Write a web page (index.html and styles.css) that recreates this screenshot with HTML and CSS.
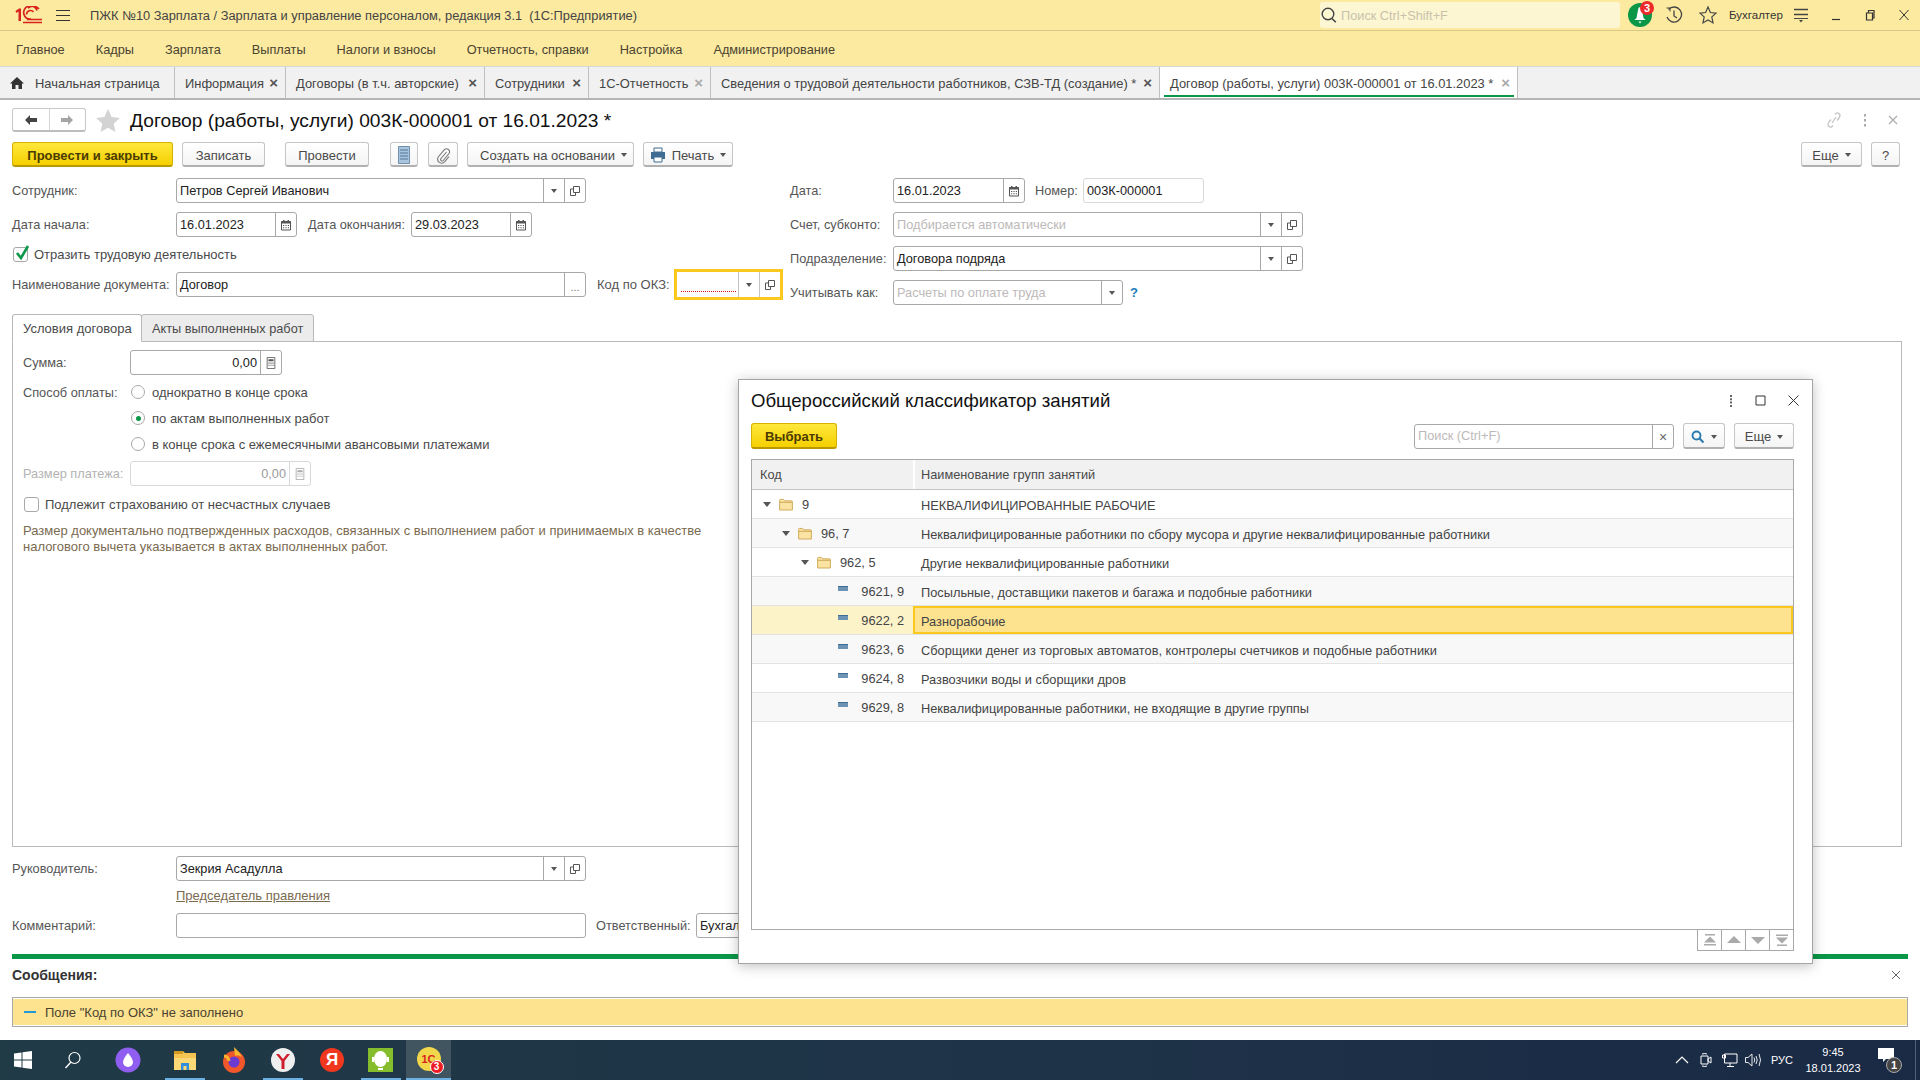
FILE: index.html
```html
<!DOCTYPE html>
<html lang="ru">
<head>
<meta charset="UTF-8" />
<title>Договор (работы, услуги) 003К-000001</title>
<link rel="stylesheet" href="styles.css">
</head>
<body>

<svg class="defs" width="0" height="0">
  <symbol id="copy" viewBox="0 0 12 12"><path d="M4.5 1.5h6v6h-6zM4.5 4h-3v6.5h5V7.5" fill="none" stroke="#555" stroke-width="1"/></symbol>
  <symbol id="cal" viewBox="0 0 12 12"><path d="M1.5 2.5h9v8.500h-9z" fill="#fff" stroke="#555"/><path d="M1.500 2h9v2.500h-9zM3 1h1.500v2H3zM7.500 1H9v2H7.500z" fill="#555"/><path d="M3 6h1.200v1H3zM5.400 6h1.200v1H5.400zM7.800 6H9v1H7.800zM3 8.300h1.200v1H3zM5.400 8.300h1.200v1H5.400zM7.800 8.300H9v1H7.800z" fill="#555"/></symbol>
  <symbol id="calc" viewBox="0 0 12 14"><path d="M1.500 .5h9v13h-9z" fill="#fff" stroke="currentColor"/><path d="M3 2.500h6v2.500H3zM3 6.500h1.300v1.300H3zM5.350 6.500h1.300v1.300h-1.300zM7.700 6.500H9v1.300H7.700zM3 9h1.300v1.300H3zM5.350 9h1.300v1.300h-1.300zM7.700 9H9v1.300H7.700z" fill="currentColor"/></symbol>
  <symbol id="folder" viewBox="0 0 16 14"><path d="M.7 13.300V2.200q0-1 1-1h3.500l1.500 1.600h7.600q1 0 1 1v9.500z" fill="#fbe3a3" stroke="#c9a24d"/><path d="M1 4.500h14" stroke="#c9a24d"/></symbol>
</svg>

<div class="app">

  <header class="titlebar">
    <svg class="logo" width="30" height="18" viewBox="0 0 30 18">
      <path d="M2.500 5 6 2.500h2V15H5.500V5.500L3.300 7z" fill="#d8231f"/>
      <path d="M24 4.500A6 6 0 0 0 11 8.500 6 6 0 0 0 18 13M26 3A8 8 0 0 0 15 2M13.500 8.500a4 4 0 0 1 7-2.600" fill="none" stroke="#d8231f" stroke-width="1.700"/>
      <path d="M14 12.800h15v1.500H14zM10 15.800h19v1.500H10z" fill="#d8231f"/>
    </svg>
    <span class="burger"></span>
    <span class="app-name">ПЖК №10 Зарплата / Зарплата и управление персоналом, редакция 3.1&nbsp; (1С:Предприятие)</span>
    <div class="global-search">
      <svg width="18" height="18" viewBox="0 0 18 18"><circle cx="8" cy="8" r="5.800" fill="none" stroke="#444" stroke-width="1.400"/><path d="m12 12.500 3.800 3.800" stroke="#444" stroke-width="1.600"/></svg>
      <span>Поиск Ctrl+Shift+F</span>
    </div>
    <div class="bell">
      <svg width="26" height="26" viewBox="0 0 26 26"><circle cx="12" cy="14" r="12" fill="#0a9748"/><path d="M12 6q1.500 0 2 3l1.500 8 2 2h-11l2-2 1.500-8q.5-3 2-3zM10.500 20.500h3l-1.500 2z" fill="#fff"/></svg>
      <b class="bell-count">3</b>
    </div>
    <svg class="tb-ico tb-hist" width="20" height="20" viewBox="0 0 20 20"><path d="M4.500 4.500A7.500 7.500 0 1 1 3 12" fill="none" stroke="#444" stroke-width="1.300"/><path d="m2.500 3 3.500 0 0 3.500" fill="none" stroke="#444"/><path d="M10 5.500V11l3 2" fill="none" stroke="#444" stroke-width="1.300"/></svg>
    <svg class="tb-ico tb-star" width="20" height="20" viewBox="0 0 20 20"><path d="m10 2 2.400 5.500 5.600.6-4.200 3.800 1.200 6L10 14.900 5 17.900l1.200-6L2 8.100l5.600-.6z" fill="none" stroke="#444" stroke-width="1.200"/></svg>
    <span class="user-name">Бухгалтер</span>
    <svg class="tb-ico tb-lines" width="16" height="16" viewBox="0 0 16 16"><path d="M1 2.500h14M1 7.500h14" stroke="#444" stroke-width="1.300"/><path d="M1 11.500h14" stroke="#444" stroke-width="1"/><path d="m6 13 2 2.500 2-2.500z" fill="#444"/></svg>
    <div class="win-btns">
      <svg width="12" height="12" viewBox="0 0 12 12"><path d="M2 10.500h8" stroke="#333" stroke-width="1.200"/></svg>
      <svg width="12" height="12" viewBox="0 0 12 12"><path d="M2.500 4h6v7h-6zM4.500 4V1.500h5.500V9H8.500" fill="none" stroke="#333" stroke-width="1.200"/></svg>
      <svg width="12" height="12" viewBox="0 0 12 12"><path d="m1.500 1 9 10M10.500 1l-9 10" stroke="#333" stroke-width="1"/></svg>
    </div>
  </header>

  <nav class="menu">
    <a class="menu-a">Главное</a>
    <a class="menu-a">Кадры</a>
    <a class="menu-a">Зарплата</a>
    <a class="menu-a">Выплаты</a>
    <a class="menu-a">Налоги и взносы</a>
    <a class="menu-a">Отчетность, справки</a>
    <a class="menu-a">Настройка</a>
    <a class="menu-a">Администрирование</a>
  </nav>

  <div class="tabs">
    <div class="tab t-home">
      <svg width="14" height="14" viewBox="0 0 14 14"><path d="M7 1 0 7.500h2V13h3.500V9h3v4H12V7.500h2z" fill="#333"/></svg>
      <span>Начальная страница</span>
    </div>
    <div class="tab t-info"><span>Информация</span><i class="x">×</i></div>
    <div class="tab t-dog"><span>Договоры (в т.ч. авторские)</span><i class="x">×</i></div>
    <div class="tab t-emp"><span>Сотрудники</span><i class="x">×</i></div>
    <div class="tab t-otch"><span>1С-Отчетность</span><i class="x light">×</i></div>
    <div class="tab t-sved"><span>Сведения о трудовой деятельности работников, СЗВ-ТД (создание) *</span><i class="x">×</i></div>
    <div class="tab t-cur"><span>Договор (работы, услуги) 003К-000001 от 16.01.2023 *</span><i class="x light">×</i></div>
  </div>

  <main class="doc">
    <div class="doc-head">
      <div class="nav-arrows">
        <span class="nav-btn">
          <svg width="14" height="12" viewBox="0 0 14 12"><path d="M6 1 1 6l5 5V8h7V4H6z" fill="#444"/></svg>
        </span>
        <span class="nav-btn">
          <svg width="14" height="12" viewBox="0 0 14 12"><path d="m8 1 5 5-5 5V8H1V4h7z" fill="#a5a5a5"/></svg>
        </span>
      </div>
      <svg class="fav" width="26" height="25" viewBox="0 0 26 25"><path d="m13 1 3.600 8 8.400.9-6.300 5.700 1.800 8.400L13 19.700 5.500 24l1.800-8.400L1 9.900 9.400 9z" fill="#d3d3d3"/></svg>
      <h1 class="doc-title">Договор (работы, услуги) 003К-000001 от 16.01.2023 *</h1>
      <div class="head-tools">
        <svg width="16" height="18" viewBox="0 0 16 18"><path d="M9 3.500q2-2.500 4-1t0 4.500l-2 2.500M7 14.500q-2 2.500-4 1T3 11l2-2.500M6 12l4-6" fill="none" stroke="#c4c4c4" stroke-width="1.300"/></svg>
        <svg width="4" height="14" viewBox="0 0 4 14"><path d="M1 1h2v2.500H1zM1 6h2v2.500H1zM1 11h2v2.500H1z" fill="#aaa"/></svg>
        <svg width="10" height="10" viewBox="0 0 10 10"><path d="m1 1 8 8M9 1 1 9" stroke="#aaa" stroke-width="1.100"/></svg>
      </div>
    </div>

    <div class="cmd">
      <button class="btn primary b-post">Провести и закрыть</button>
      <button class="btn b-save">Записать</button>
      <button class="btn b-do">Провести</button>
      <button class="btn b-ic1">
        <svg width="12" height="18" viewBox="0 0 12 18"><path d="M.5.500h11v17H.5z" fill="#a9c4dd" stroke="#6f8fac"/><path d="M2 4h8M2 7h8M2 10h8M2 13h8" stroke="#4f7598"/></svg>
      </button>
      <button class="btn b-ic2">
        <svg width="15" height="17" viewBox="0 0 15 17"><path d="M10.500 5 5 11.500a1.500 1.500 0 0 0 2.300 2L13 6.500a3 3 0 0 0-4.600-3.800L2.600 9.500a4 4 0 0 0 6 5.300L13 9.500" fill="none" stroke="#777" stroke-width="1.100"/></svg>
      </button>
      <button class="btn b-base">Создать на основании<i class="caret"></i></button>
      <button class="btn b-print">
        <svg width="16" height="16" viewBox="0 0 16 16"><path d="M4 1h8v4H4z" fill="#fff" stroke="#3f6c92"/><path d="M1 5h14v7h-3v-2H4v2H1z" fill="#3f6c92"/><path d="M4 10h8v5H4z" fill="#fff" stroke="#3f6c92"/></svg>
        Печать<i class="caret"></i>
      </button>
      <div class="cmd-right">
        <button class="btn b-more">Еще<i class="caret"></i></button>
        <button class="btn b-help">?</button>
      </div>
    </div>

    <div class="cols">
      <div class="col-left">
        <div class="row">
          <label class="lbl l164">Сотрудник:</label>
          <div class="fld w410"><span class="val">Петров Сергей Иванович</span><span class="sb"><i class="caret"></i></span><span class="sb"><svg class="ico"><use href="#copy"/></svg></span></div>
        </div>
        <div class="row">
          <label class="lbl l164">Дата начала:</label>
          <div class="fld w121"><span class="val">16.01.2023</span><span class="sb"><svg class="ico"><use href="#cal"/></svg></span></div>
          <label class="lbl end-lbl">Дата окончания:</label>
          <div class="fld w121"><span class="val">29.03.2023</span><span class="sb"><svg class="ico"><use href="#cal"/></svg></span></div>
        </div>
        <div class="check-row">
          <span class="chk">
            <svg width="16" height="17" viewBox="0 0 16 17"><path d="m3 8 4 5 7-12" fill="none" stroke="#0a9748" stroke-width="2.600"/></svg>
          </span>
          <span class="chk-text">Отразить трудовую деятельность</span>
        </div>
        <div class="row">
          <label class="lbl l164">Наименование документа:</label>
          <div class="fld w410"><span class="val">Договор</span><span class="sb dots">...</span></div>
          <label class="lbl okz-lbl">Код по ОКЗ:</label>
          <div class="fld okz"><span class="val"><i class="need"></i></span><span class="sb"><i class="caret"></i></span><span class="sb"><svg class="ico"><use href="#copy"/></svg></span></div>
        </div>
      </div>

      <div class="col-right">
        <div class="row">
          <label class="lbl l103">Дата:</label>
          <div class="fld w132"><span class="val">16.01.2023</span><span class="sb"><svg class="ico"><use href="#cal"/></svg></span></div>
          <label class="lbl num-lbl">Номер:</label>
          <div class="fld w121 readonly"><span class="val">003К-000001</span></div>
        </div>
        <div class="row">
          <label class="lbl l103">Счет, субконто:</label>
          <div class="fld w410"><span class="val hint">Подбирается автоматически</span><span class="sb"><i class="caret"></i></span><span class="sb"><svg class="ico"><use href="#copy"/></svg></span></div>
        </div>
        <div class="row">
          <label class="lbl l103">Подразделение:</label>
          <div class="fld w410"><span class="val">Договора подряда</span><span class="sb"><i class="caret"></i></span><span class="sb"><svg class="ico"><use href="#copy"/></svg></span></div>
        </div>
        <div class="row">
          <label class="lbl l103">Учитывать как:</label>
          <div class="fld w230"><span class="val hint">Расчеты по оплате труда</span><span class="sb"><i class="caret"></i></span></div>
          <span class="q">?</span>
        </div>
      </div>
    </div>

    <div class="page-tabs">
      <div class="ptab on">Условия договора</div>
      <div class="ptab">Акты выполненных работ</div>
    </div>
    <section class="panel">
      <div class="row">
        <label class="lbl l107">Сумма:</label>
        <div class="fld w152"><span class="val right">0,00</span><span class="sb calc"><svg class="ico"><use href="#calc"/></svg></span></div>
      </div>
      <div class="radio-row first"><label class="lbl l107">Способ оплаты:</label><i class="radio"></i><span>однократно в конце срока</span></div>
      <div class="radio-row"><span class="l107"></span><i class="radio on"></i><span>по актам выполненных работ</span></div>
      <div class="radio-row"><span class="l107"></span><i class="radio"></i><span>в конце срока с ежемесячными авансовыми платежами</span></div>
      <div class="row pay-row">
        <label class="lbl l107 off">Размер платежа:</label>
        <div class="fld w181 disabled"><span class="val right">0,00</span><span class="sb calc"><svg class="ico"><use href="#calc"/></svg></span></div>
      </div>
      <div class="check-row ins"><span class="chk"></span><span class="chk-text">Подлежит страхованию от несчастных случаев</span></div>
      <p class="note">Размер документально подтвержденных расходов, связанных с выполнением работ и принимаемых в качестве<br>налогового вычета указывается в актах выполненных работ.</p>
    </section>

    <div class="row boss">
      <label class="lbl l164">Руководитель:</label>
      <div class="fld w410"><span class="val">Зекрия Асадулла</span><span class="sb"><i class="caret"></i></span><span class="sb"><svg class="ico"><use href="#copy"/></svg></span></div>
    </div>
    <a class="boss-link">Председатель правления</a>
    <div class="row comment">
      <label class="lbl l164">Комментарий:</label>
      <div class="fld w410"></div>
      <label class="lbl resp-lbl">Ответственный:</label>
      <div class="fld w121"><span class="val">Бухгалтер</span></div>
    </div>
    <div class="green-bar"></div>

    <div class="msg-head">
      <b>Сообщения:</b>
      <svg width="10" height="10" viewBox="0 0 10 10"><path d="m1 1 8 8M9 1 1 9" stroke="#666" stroke-width="1"/></svg>
    </div>
    <div class="msg-box"><div class="msg-fill"><i class="dash"></i>Поле "Код по ОКЗ" не заполнено</div></div>
  </main>

  <footer class="taskbar">
    <svg class="task-ico win" width="18" height="18" viewBox="0 0 18 18"><path d="m0 2.500 7.500-1V8.500H0zM8.500 1.300 18 0v8.500H8.500zM0 9.500h7.500v7l-7.500-1zM8.500 9.500H18V18l-9.500-1.300z" fill="#fff"/></svg>
    <svg class="task-ico s" width="18" height="18" viewBox="0 0 18 18"><circle cx="10.500" cy="7" r="5.500" fill="none" stroke="#fff" stroke-width="1.200"/><path d="M7 11 1.500 17" stroke="#fff" stroke-width="1.400"/></svg>
    <svg class="task-ico alice" width="26" height="26" viewBox="0 0 26 26"><circle cx="13" cy="13" r="12.500" fill="#8f5df0"/><path d="M13 6q5 6 5 9a5 5 0 0 1-10 0q0-3 5-9z" fill="#fff"/></svg>
    <svg class="task-ico expl" width="24" height="24" viewBox="0 0 24 24"><path d="M1 3h9l2 2h11v17H1z" fill="#f5c451"/><path d="M1 3h9v3H1z" fill="#d39a22"/><path d="M1 10h22v12H1z" fill="#fbd977"/><path d="M8 15h8v7h-2.500v-4h-3v4H8z" fill="#2f8fdc"/></svg>
    <svg class="task-ico fox" width="24" height="26" viewBox="0 0 24 26"><circle cx="12" cy="15" r="11" fill="#f0572a"/><path d="M12 0q5 4 8 10-5-3-7-1z" fill="#fcb52d"/><circle cx="12" cy="15" r="5.500" fill="#6b3ad1"/><path d="M2 9q4 0 5 5" fill="none" stroke="#fbb52f" stroke-width="3"/></svg>
    <svg class="task-ico yb" width="24" height="24" viewBox="0 0 24 24"><circle cx="12" cy="12" r="12" fill="#efefef"/><path d="m5 6 5.500 7v8h3v-8L19 6h-3l-4 5-4-5z" fill="#cf1d2c"/></svg>
    <div class="task-ico ya">Я</div>
    <svg class="task-ico gr" width="25" height="24" viewBox="0 0 25 24"><path d="M0 0h25v24H0z" fill="#85bd2c"/><ellipse cx="12.500" cy="11" rx="6.500" ry="8" fill="#fff"/><path d="M5 9v5M20 9v5M10 21h5" stroke="#fff" stroke-width="2"/></svg>
    <div class="task-active">
      <div class="c1-ico">1С<b class="c1-badge">3</b></div>
    </div>
    <i class="run r1"></i>
    <i class="run r2"></i>
    <i class="run r3"></i>
    <div class="tray">
      <svg class="tr-cam" width="14" height="8" viewBox="0 0 14 8"><path d="m1 7 6-6 6 6" fill="none" stroke="#fff" stroke-width="1.200"/></svg>
      <svg class="tr-rec" width="12" height="16" viewBox="0 0 12 16"><path d="M1 4h7v8H1zM8 7l3-2v6L8 9zM2 2q3-1 5 0M2 14q3 1 5 0" fill="none" stroke="#fff"/></svg>
      <svg class="tr-net" width="16" height="14" viewBox="0 0 16 14"><path d="M2.500 1H15v9H2.500zM8 10v3M5 13.500h7M.5 2h3v3h-3z" fill="#1b2a45" stroke="#fff"/></svg>
      <svg class="tr-vol" width="16" height="14" viewBox="0 0 16 14"><path d="M.5 4.500H3L7 1v12L3 9.500H.5zM9 4.500q1.500 2.500 0 5M11 3q2.500 4 0 8M14 1q3 6 0 12" fill="none" stroke="#fff" stroke-width=".9"/></svg>
      <span class="lang">РУС</span>
      <div class="clock"><span>9:45</span><span>18.01.2023</span></div>
      <div class="notif">
        <svg width="16" height="15" viewBox="0 0 16 15"><path d="M0 0h16v11H8l-3 3v-3H0z" fill="#fff"/></svg>
        <b>1</b>
      </div>
    </div>
  </footer>

  <div class="dialog">
    <div class="dlg-title">
      <h2>Общероссийский классификатор занятий</h2>
      <svg width="4" height="12" viewBox="0 0 4 12"><path d="M1 0h2v2H1zM1 3.300h2v2H1zM1 6.600h2v2H1zM1 10h2v2H1z" fill="#666"/></svg>
      <svg width="11" height="11" viewBox="0 0 11 11"><path d="M1 1h9v9H1z" fill="none" stroke="#333" stroke-width="1"/></svg>
      <svg width="11" height="11" viewBox="0 0 11 11"><path d="m.5.500 10 10M10.500.500l-10 10" stroke="#333" stroke-width="1"/></svg>
    </div>
    <div class="dlg-tools">
      <button class="btn primary b-pick">Выбрать</button>
      <div class="dlg-right">
        <div class="fld search"><span class="val hint">Поиск (Ctrl+F)</span><span class="sb clr">×</span></div>
        <button class="btn b-find">
          <svg width="14" height="14" viewBox="0 0 14 14"><circle cx="5.500" cy="5.500" r="4" fill="none" stroke="#2c7bb0" stroke-width="1.900"/><path d="m8.500 8.500 4 4" stroke="#2c7bb0" stroke-width="2.200"/></svg>
          <i class="caret"></i>
        </button>
        <button class="btn b-dmore">Еще<i class="caret"></i></button>
      </div>
    </div>
    <div class="grid">
      <div class="g-head"><div class="g-code">Код</div><div class="g-name">Наименование групп занятий</div></div>
      <div class="g-row">
        <div class="g-code tree lv0"><i class="caret open"></i><svg class="folder"><use href="#folder"/></svg><span>9</span></div>
        <div class="g-name">НЕКВАЛИФИЦИРОВАННЫЕ РАБОЧИЕ</div>
      </div>
      <div class="g-row alt">
        <div class="g-code tree lv1"><i class="caret open"></i><svg class="folder"><use href="#folder"/></svg><span>96, 7</span></div>
        <div class="g-name">Неквалифицированные работники по сбору мусора и другие неквалифицированные работники</div>
      </div>
      <div class="g-row">
        <div class="g-code tree lv2"><i class="caret open"></i><svg class="folder"><use href="#folder"/></svg><span>962, 5</span></div>
        <div class="g-name">Другие неквалифицированные работники</div>
      </div>
      <div class="g-row alt">
        <div class="g-code leaf"><i class="item"></i><span>9621, 9</span></div>
        <div class="g-name">Посыльные, доставщики пакетов и багажа и подобные работники</div>
      </div>
      <div class="g-row sel">
        <div class="g-code leaf"><i class="item"></i><span>9622, 2</span></div>
        <div class="g-name">Разнорабочие</div>
      </div>
      <div class="g-row alt">
        <div class="g-code leaf"><i class="item"></i><span>9623, 6</span></div>
        <div class="g-name">Сборщики денег из торговых автоматов, контролеры счетчиков и подобные работники</div>
      </div>
      <div class="g-row">
        <div class="g-code leaf"><i class="item"></i><span>9624, 8</span></div>
        <div class="g-name">Развозчики воды и сборщики дров</div>
      </div>
      <div class="g-row alt">
        <div class="g-code leaf"><i class="item"></i><span>9629, 8</span></div>
        <div class="g-name">Неквалифицированные работники, не входящие в другие группы</div>
      </div>
    </div>
    <div class="pager">
      <span><svg width="14" height="12" viewBox="0 0 14 12"><path d="M2 0h10v1.500H2zM7 2.500l6 6H1zM1 10h12v1.500H1z" fill="#aaa"/></svg></span>
      <span><svg width="14" height="8" viewBox="0 0 14 8"><path d="m7 0 7 7H0z" fill="#aaa"/></svg></span>
      <span><svg width="14" height="8" viewBox="0 0 14 8"><path d="M7 8 14 1H0z" fill="#aaa"/></svg></span>
      <span><svg width="14" height="12" viewBox="0 0 14 12"><path d="M1 .500h12V2H1zM7 9.500l6-6H1zM2 10.500h10V12H2z" fill="#aaa"/></svg></span>
    </div>
  </div>

</div>

</body>
</html>
```

FILE: styles.css
```css
* {
  box-sizing: border-box;
}
html, body {
  margin: 0;
  padding: 0;
}
body {
  font-family: "Liberation Sans", Arial, sans-serif;
  font-size: 12.75px;
  color: #4a4a4a;
  background: #fff;
}
.defs {
  position: absolute;
}
button {
  font-family: inherit;
  font-size: 13px;
}
i {
  font-style: normal;
}
.app {
  position: relative;
  width: 1920px;
  height: 1080px;
  overflow: hidden;
  display: flex;
  flex-direction: column;
}

/* title bar */
.titlebar {
  height: 31px;
  background: #fbeaa0;
  border-bottom: 1px solid #d9c987;
  display: flex;
  align-items: center;
  padding: 0 10px 0 13px;
  flex: none;
}
.logo {
  flex: none;
}
.burger {
  width: 14px;
  height: 11px;
  margin-left: 13px;
  border-top: 1px solid #333;
  border-bottom: 1px solid #333;
  position: relative;
}
.burger::after {
  content: "";
  position: absolute;
  left: 0;
  right: 0;
  top: 4px;
  height: 1px;
  background: #333;
}
.app-name {
  margin-left: 20px;
  padding-top: 1px;
  color: #444;
  font-size: 12.85px;
  white-space: nowrap;
}
.global-search {
  width: 300px;
  height: 26px;
  margin-left: auto;
  background: #fdf6d3;
  border-radius: 3px;
  display: flex;
  align-items: center;
  color: #c8c2ab;
  gap: 3px;
}
.bell {
  position: relative;
  margin-left: 8px;
  width: 26px;
  height: 28px;
}
.bell-count {
  position: absolute;
  top: 0;
  left: 12px;
  width: 14px;
  height: 14px;
  border-radius: 50%;
  background: #ee2a2a;
  color: #fff;
  font-size: 11px;
  line-height: 14px;
  text-align: center;
}
.tb-ico {
  flex: none;
}
.tb-hist {
  margin-left: 10px;
}
.tb-star {
  margin-left: 14px;
}
.user-name {
  margin-left: 11px;
  font-size: 11.5px;
  color: #333;
  width: 56px;
  white-space: nowrap;
}
.tb-lines {
  margin-left: 8px;
}
.win-btns {
  margin-left: 21px;
  display: flex;
  gap: 22px;
}

/* menu */
.menu {
  height: 36px;
  background: #fbeaa0;
  border-bottom: 1px solid #d6d6d6;
  display: flex;
  align-items: center;
  padding: 1px 0 0 16px;
  flex: none;
}
.menu-a {
  color: #4a4331;
  white-space: nowrap;
  margin-right: 31px;
}

/* open windows */
.tabs {
  height: 33px;
  background: #f1f1f1;
  border-bottom: 2px solid #b5b5b5;
  display: flex;
  flex: none;
  font-size: 12.9px;
}
.tab {
  display: flex;
  align-items: center;
  justify-content: space-between;
  height: 31px;
  border-right: 1px solid #c0c0c0;
  padding: 1px 7px 0 10px;
  white-space: nowrap;
  color: #444;
  flex: none;
}
.t-home {
  width: 175px;
  justify-content: flex-start;
  gap: 11px;
}
.t-info {
  width: 111px;
}
.t-dog {
  width: 199px;
}
.t-emp {
  width: 104px;
}
.t-otch {
  width: 122px;
}
.t-sved {
  width: 449px;
}
.t-cur {
  width: 358px;
  background: #fff;
  position: relative;
}
.t-cur::after {
  content: "";
  position: absolute;
  left: 4px;
  right: 3px;
  bottom: 1px;
  height: 2px;
  background: #0a9748;
}
.x {
  font-size: 15px;
  font-weight: bold;
  color: #555;
  line-height: 14px;
}
.x.light {
  color: #aaa;
}

/* document */
.doc {
  flex: 1;
  padding: 8px 12px 0;
  min-height: 0;
}
.doc-head {
  display: flex;
  align-items: center;
  height: 24px;
}
.nav-arrows {
  display: flex;
  width: 74px;
  height: 24px;
  border: 1px solid #c9c9c9;
  border-bottom: 2px solid #bdbdbd;
  border-radius: 3px;
}
.nav-btn {
  flex: 1;
  display: flex;
  align-items: center;
  justify-content: center;
}
.nav-btn + .nav-btn {
  border-left: 1px solid #d6d6d6;
}
.fav {
  margin-left: 9px;
}
.doc-title {
  font-size: 19.2px;
  font-weight: normal;
  color: #111;
  margin: 0 0 0 9px;
  padding-top: 1px;
}
.head-tools {
  margin-left: auto;
  display: flex;
  align-items: center;
  gap: 21px;
  padding-right: 10px;
}
.cmd {
  display: flex;
  margin-top: 10px;
  height: 25px;
}
.btn {
  height: 25px;
  background: linear-gradient(#fff, #f4f4f4);
  border: 1px solid #c6c6c6;
  border-bottom: 2px solid #b0b0b0;
  border-radius: 3px;
  color: #4a4a4a;
  padding: 2px 0 0;
  display: flex;
  align-items: center;
  justify-content: center;
  flex: none;
}
.btn.primary {
  background: linear-gradient(#ffe83c, #f5cf00);
  border-color: #d6b100;
  border-bottom-color: #b89a00;
  color: #4a3b00;
  font-size: 13px;
  font-weight: bold;
}
.caret {
  display: inline-block;
  width: 0;
  height: 0;
  border-left: 3px solid transparent;
  border-right: 3px solid transparent;
  border-top: 4px solid #555;
  margin-left: 6px;
}
.b-post {
  width: 161px;
}
.b-save {
  width: 83px;
  margin-left: 9px;
}
.b-do {
  width: 84px;
  margin-left: 20px;
}
.b-ic1 {
  width: 28px;
  margin-left: 21px;
}
.b-ic2 {
  width: 30px;
  margin-left: 10px;
}
.b-base {
  width: 167px;
  margin-left: 9px;
  padding-left: 6px;
}
.b-print {
  width: 90px;
  margin-left: 9px;
  gap: 6px;
}
.b-print .caret {
  margin-left: 0;
}
.cmd-right {
  margin-left: auto;
  display: flex;
  gap: 9px;
  padding-right: 8px;
}
.b-more {
  width: 61px;
}
.b-help {
  width: 29px;
  font-size: 13px;
}

/* fields */
.cols {
  display: flex;
  margin-top: 11px;
  height: 126px;
}
.col-left {
  width: 778px;
  flex: none;
}
.row {
  display: flex;
  align-items: center;
  height: 25px;
  margin-bottom: 9px;
}
.lbl {
  color: #555;
  white-space: nowrap;
  flex: none;
}
.l164 {
  width: 164px;
}
.l103 {
  width: 103px;
}
.l107 {
  width: 107px;
  flex: none;
}
.fld {
  height: 25px;
  display: flex;
  background: #fff;
  border: 1px solid #a8a8a8;
  border-radius: 3px;
  flex: none;
}
.w121 {
  width: 121px;
}
.w132 {
  width: 132px;
}
.w152 {
  width: 152px;
}
.w181 {
  width: 181px;
}
.w230 {
  width: 230px;
}
.w410 {
  width: 410px;
}
.val {
  flex: 1;
  min-width: 0;
  padding: 0 3px;
  line-height: 24px;
  height: 23px;
  color: #222;
  white-space: nowrap;
  overflow: hidden;
}
.val.right {
  text-align: right;
}
.val.hint {
  color: #bdb9b9;
}
.sb {
  width: 21px;
  flex: none;
  border-left: 1px solid #a8a8a8;
  display: flex;
  align-items: center;
  justify-content: center;
}
.sb .caret {
  margin: 0;
}
.ico {
  width: 12px;
  height: 12px;
  color: #555;
}
.dots {
  color: #777;
  font-size: 11px;
  padding-top: 4px;
}
.end-lbl {
  margin-left: 11px;
  width: 103px;
}
.okz-lbl {
  margin-left: 11px;
  width: 80px;
  font-size: 13px;
}
.okz {
  width: 103px;
  border: 0;
  border-radius: 0;
  outline: 3px solid #fbc91e;
}
.okz .val {
  position: relative;
}
.need {
  position: absolute;
  left: 4px;
  right: 2px;
  bottom: 3px;
  border-bottom: 1px dotted #d11;
}
.okz .sb {
  border-left-color: #c4c4c4;
}
.check-row {
  display: flex;
  align-items: center;
  height: 16px;
  margin: 0 0 10px 1px;
  gap: 6px;
}
.chk {
  width: 15px;
  height: 15px;
  border: 1px solid #a8a8a8;
  border-radius: 3px;
  flex: none;
  position: relative;
}
.chk svg {
  position: absolute;
  left: 0;
  top: -3px;
}
.chk-text {
  color: #4a4a4a;
  font-size: 13px;
}
.num-lbl {
  margin-left: 10px;
  width: 48px;
}
.readonly {
  border-color: #d8d8d8;
}
.q {
  color: #1b7db8;
  font-size: 13px;
  font-weight: bold;
  margin-left: 7px;
}

/* page tabs */
.page-tabs {
  display: flex;
  margin-top: 10px;
  height: 28px;
  position: relative;
}
.ptab {
  height: 28px;
  padding: 0 10px;
  line-height: 27px;
  border: 1px solid #b9b9b9;
  border-radius: 3px 3px 0 0;
  background: #ececec;
  color: #4a4a4a;
  margin-left: -1px;
  white-space: nowrap;
}
.ptab.on {
  background: #fff;
  border-bottom-color: #fff;
  margin-left: 0;
  position: relative;
  z-index: 1;
  width: 130px;
  font-size: 13px;
}
.panel {
  height: 506px;
  width: 1890px;
  margin-top: -1px;
  border: 1px solid #b9b9b9;
  padding: 8px 10px;
}
.panel .row {
  margin-bottom: 0;
}
.radio-row {
  display: flex;
  align-items: center;
  height: 24px;
  margin-bottom: 2px;
  color: #4a4a4a;
  font-size: 13px;
}
.radio-row .lbl {
  font-size: 12.75px;
}
.radio-row.first {
  margin-top: 5px;
}
.radio {
  width: 14px;
  height: 14px;
  margin: 0 7px 0 1px;
  border: 1px solid #a8a8a8;
  border-radius: 50%;
  flex: none;
  position: relative;
}
.radio.on::after {
  content: "";
  position: absolute;
  left: 3.5px;
  top: 3.5px;
  width: 5px;
  height: 5px;
  border-radius: 50%;
  background: #0a9748;
}
.panel .pay-row {
  margin-top: 5px;
}
.off {
  color: #b3b3b3;
}
.disabled {
  border-color: #d8d8d8;
}
.disabled .val {
  color: #9b9b9b;
}
.disabled .sb {
  border-left-color: #d8d8d8;
}
.disabled .ico {
  color: #aaa;
}
.check-row.ins {
  margin: 10px 0 0 1px;
}
.note {
  margin: 11px 0 0;
  line-height: 16px;
  color: #7a6a4f;
  font-size: 13px;
}
.boss {
  margin: 9px 0 0;
}
.boss-link {
  display: block;
  margin: 7px 0 0 164px;
  height: 16px;
  line-height: 16px;
  width: max-content;
  color: #7a6a4f;
  text-decoration: underline;
  font-size: 13px;
}
.comment {
  margin: 9px 0 0;
}
.resp-lbl {
  margin-left: 10px;
  width: 100px;
}
.green-bar {
  height: 5px;
  margin-top: 16px;
  background: #0a9748;
}
.msg-head {
  height: 16px;
  margin-top: 8px;
  display: flex;
  align-items: center;
  justify-content: space-between;
  padding-right: 7px;
}
.msg-head b {
  color: #333;
  font-size: 14px;
}
.msg-box {
  height: 30px;
  margin-top: 14px;
  border: 1px solid #aaa;
  padding: 1px 0;
}
.msg-fill {
  height: 26px;
  background: #fde28f;
  display: flex;
  align-items: center;
  padding-left: 11px;
  color: #4a4331;
  font-size: 13px;
}
.dash {
  width: 12px;
  height: 2px;
  background: #1f9ad6;
  margin-right: 9px;
}

/* taskbar */
.taskbar {
  height: 40px;
  flex: none;
  display: flex;
  align-items: center;
  position: relative;
  background: linear-gradient(90deg, #203a46 0%, #1e3348 50%, #1a2a45 100%);
  padding-left: 14px;
}
.task-ico {
  flex: none;
}
.s {
  margin-left: 32px;
}
.alice {
  margin-left: 33px;
}
.expl {
  margin-left: 32px;
}
.fox {
  margin-left: 25px;
}
.yb {
  margin-left: 25px;
}
.ya {
  margin-left: 25px;
  width: 24px;
  height: 24px;
  border-radius: 50%;
  background: #f0381f;
  color: #fff;
  font-size: 17px;
  font-weight: bold;
  line-height: 24px;
  text-align: center;
}
.gr {
  margin-left: 24px;
}
.task-active {
  margin-left: 13px;
  width: 45px;
  height: 40px;
  background: #40555f;
  border-bottom: 2px solid #6db1e3;
  display: flex;
  align-items: center;
  justify-content: center;
}
.c1-ico {
  width: 24px;
  height: 24px;
  border-radius: 50%;
  background: #f2d64b;
  color: #d8231f;
  font-size: 11px;
  font-weight: bold;
  line-height: 24px;
  text-align: center;
  position: relative;
}
.c1-badge {
  position: absolute;
  right: -3px;
  bottom: -3px;
  width: 14px;
  height: 14px;
  border-radius: 50%;
  background: #ee1c25;
  border: 1px solid #fff;
  color: #fff;
  font-size: 10px;
  line-height: 12px;
}
.run {
  position: absolute;
  bottom: 0;
  width: 40px;
  height: 2px;
  background: #6db1e3;
}
.r1 {
  left: 165px;
}
.r2 {
  left: 263px;
}
.r3 {
  left: 361px;
}
.tray {
  margin-left: auto;
  display: flex;
  align-items: center;
  color: #fff;
  height: 40px;
  padding-right: 7px;
  border-right: 1px solid #51607a;
  margin-right: 4px;
  font-size: 11px;
}
.tr-rec {
  margin-left: 11px;
}
.tr-net {
  margin-left: 10px;
}
.tr-vol {
  margin-left: 7px;
}
.lang {
  margin-left: 10px;
}
.clock {
  display: flex;
  flex-direction: column;
  align-items: center;
  gap: 4px;
  width: 64px;
  margin-left: 8px;
}
.notif {
  position: relative;
  width: 30px;
  height: 30px;
  margin-left: 13px;
  padding-top: 3px;
}
.notif b {
  position: absolute;
  left: 8px;
  top: 12px;
  width: 16px;
  height: 16px;
  border-radius: 50%;
  background: #444;
  border: 1px solid #aaa;
  font-size: 11px;
  line-height: 14px;
  text-align: center;
}

/* choose form */
.dialog {
  position: absolute;
  left: 738px;
  top: 379px;
  width: 1075px;
  height: 585px;
  background: #fff;
  border: 1px solid #a5a5a5;
  box-shadow: 0 2px 12px rgba(0, 0, 0, .25);
  padding: 0 18px 0 12px;
  display: flex;
  flex-direction: column;
}
.dlg-title {
  display: flex;
  align-items: center;
  height: 41px;
  margin: 0 -5px 2px 0;
  flex: none;
}
.dlg-title h2 {
  font-size: 18.6px;
  font-weight: normal;
  color: #111;
  margin: 0 auto 0 0;
}
.dlg-title svg {
  margin-left: 22px;
}
.dlg-tools {
  display: flex;
  height: 26px;
  flex: none;
}
.b-pick {
  width: 86px;
  height: 26px;
}
.dlg-right {
  margin-left: auto;
  display: flex;
  gap: 9px;
}
.search {
  width: 260px;
  margin-top: 1px;
}
.search .val {
  line-height: 22px;
}
.clr {
  color: #666;
  font-size: 14px;
}
.b-find {
  width: 42px;
  height: 26px;
}
.b-dmore {
  width: 60px;
  height: 26px;
}
.grid {
  margin-top: 10px;
  height: 471px;
  border: 1px solid #a8a8a8;
  flex: none;
}
.g-head {
  display: flex;
  height: 30px;
  background: #f1f1f1;
  border-bottom: 1px solid #c4c4c4;
  line-height: 29px;
}
.g-head .g-name {
  border-left: 2px solid #fff;
  padding-left: 6px;
}
.g-head .g-code {
  padding-left: 8px;
}
.g-code {
  width: 161px;
  flex: none;
  padding-left: 7px;
}
.g-name {
  flex: 1;
  padding-left: 8px;
  white-space: nowrap;
}
.g-row {
  display: flex;
  height: 29px;
  line-height: 31px;
  border-bottom: 1px solid #e4e4e4;
  color: #444;
  font-size: 12.8px;
}
.g-row.alt {
  background: #f8f8f8;
}
.tree {
  display: flex;
  align-items: center;
}
.tree .caret {
  border-left-width: 4px;
  border-right-width: 4px;
  border-top-width: 5px;
  margin: 0 8px 0 0;
  flex: none;
}
.folder {
  width: 14px;
  height: 13px;
  flex: none;
  margin-right: 9px;
}
.lv0 {
  padding-left: 11px;
}
.lv1 {
  padding-left: 30px;
}
.lv2 {
  padding-left: 49px;
}
.leaf {
  display: flex;
  align-items: center;
  justify-content: flex-end;
  padding-right: 9px;
}
.item {
  width: 10px;
  height: 5px;
  background: #6d93b4;
  border-top: 1px solid #3f6c92;
  margin: -5px 13px 0 0;
}
.g-row.sel {
  background: #fdf3c9;
  line-height: 27px;
}
.g-row.sel .g-code {
  line-height: 31px;
}
.g-row.sel .g-name {
  background: #fde28f;
  border: 2px solid #fbc91e;
  padding-left: 6px;
  margin-bottom: -1px;
  height: 28px;
}
.pager {
  display: flex;
  justify-content: flex-end;
  flex: none;
}
.pager span {
  width: 25px;
  height: 22px;
  margin-top: -1px;
  border: 1px solid #a8a8a8;
  margin-left: -1px;
  display: flex;
  align-items: center;
  justify-content: center;
}
```
